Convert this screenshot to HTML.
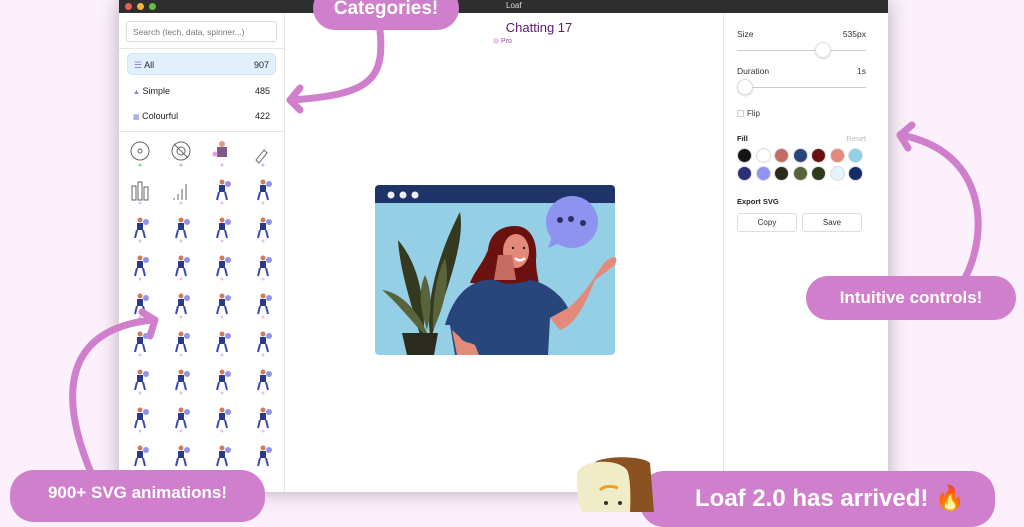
<!DOCTYPE html>
<html><head><style>
*{margin:0;padding:0;box-sizing:border-box}
body{width:1024px;height:512px;overflow:hidden;background:#fbf0fb;font-family:"Liberation Sans",sans-serif;position:relative}
.a{position:absolute}
.win{left:119px;top:0;width:769px;height:492px;background:#fff;box-shadow:0 0 18px rgba(60,40,60,.35)}
.tb{left:0;top:0;width:769px;height:13px;background:#2e2e2e}
.pill{position:absolute;background:#cf7fcc;color:#fff;font-weight:bold;border-radius:24px;text-align:center}
.row{position:absolute;left:8px;width:149px;height:22px;font-size:9px;color:#222;line-height:22px;padding:0 6px}
.sw{position:absolute;width:15px;height:15px;border-radius:50%;border:1px solid #ddd}
.btn{position:absolute;width:60px;height:19px;border:1px solid #ddd;border-radius:3px;font-size:8px;color:#333;text-align:center;line-height:18px}
</style></head><body>
<div class="a win">
 <div class="a tb">
  <div class="a" style="left:6px;top:3px;width:7px;height:7px;border-radius:50%;background:#ee5b55"></div>
  <div class="a" style="left:18px;top:3px;width:7px;height:7px;border-radius:50%;background:#f0b53a"></div>
  <div class="a" style="left:30px;top:3px;width:7px;height:7px;border-radius:50%;background:#5ec143"></div>
  <div class="a" style="left:387px;top:1px;font-size:8px;color:#ddd">Loaf</div>
 </div>
 <div class="a" style="left:165px;top:13px;width:1px;height:479px;background:#e6e6e6"></div>
 <div class="a" style="left:604px;top:13px;width:1px;height:479px;background:#e6e6e6"></div>
 <div class="a" style="left:7px;top:21px;width:151px;height:21px;border:1px solid #ddd;border-radius:3px;font-size:8.5px;color:#777;padding:5px 6px">Search (tech, data, spinner...)</div>
 <div class="a" style="left:0;top:48px;width:165px;height:1px;background:#e6e6e6"></div>
 <div class="row" style="top:53px;background:#e1f0fb;border:1px solid #cfe3f3;border-radius:5px"><span style="color:#7c7fe0">☰</span> All<span style="float:right">907</span></div>
 <div class="row" style="top:80px"><span style="color:#7c7fe0;font-size:7px">▲</span> Simple<span style="float:right">485</span></div>
 <div class="row" style="top:105px"><span style="color:#7c7fe0;font-size:7px">▦</span> Colourful<span style="float:right">422</span></div>
 <div class="a" style="left:0;top:131px;width:165px;height:1px;background:#e6e6e6"></div>
 <svg class="a" style="left:0;top:132px" width="165" height="340">
  <defs>
   <g id="fig">
    <circle cx="6" cy="-6" r="3" fill="#8f93f0"/><circle cx="0" cy="-8" r="2.5" fill="#d07a5a"/><rect x="-3" y="-5" width="6" height="7" fill="#2a3a8a"/><path d="M-3 2l-2 8M3 2l2 8" stroke="#3b4ab0" stroke-width="2"/>
   </g>
  </defs>
  <g fill="none" stroke="#666" stroke-width="1">
   <circle cx="21" cy="19" r="9"/><circle cx="21" cy="19" r="2"/>
   <circle cx="62" cy="19" r="9"/><circle cx="62" cy="19" r="4"/><line x1="55" y1="12" x2="69" y2="26"/>
   <rect x="13" y="54" width="4" height="14"/><rect x="19" y="50" width="4" height="18"/><rect x="25" y="55" width="4" height="13"/>
   <line x1="55" y1="66" x2="55" y2="68"/><line x1="59" y1="62" x2="59" y2="68"/><line x1="63" y1="57" x2="63" y2="68"/><line x1="67" y1="52" x2="67" y2="68"/>
   <path d="M137 28l8-10 3 3-8 10z"/>
  </g>
  <circle cx="103" cy="12" r="3" fill="#e29a8a"/><rect x="98" y="15" width="10" height="10" fill="#7d5a8a"/><circle cx="96" cy="22" r="2.5" fill="#e6a0e0"/>
  <g fill="#d9b0f0"><circle cx="21" cy="33" r="1.5" fill="#7fdc8a"/><circle cx="62" cy="33" r="1.5"/><circle cx="103" cy="33" r="1.5"/><circle cx="144" cy="33" r="1.5"/></g>
  <use href="#fig" x="103" y="58"/><use href="#fig" x="144" y="58"/>
  <use href="#fig" x="21" y="96"/><use href="#fig" x="62" y="96"/><use href="#fig" x="103" y="96"/><use href="#fig" x="144" y="96"/>
  <use href="#fig" x="21" y="134"/><use href="#fig" x="62" y="134"/><use href="#fig" x="103" y="134"/><use href="#fig" x="144" y="134"/>
  <use href="#fig" x="21" y="172"/><use href="#fig" x="62" y="172"/><use href="#fig" x="103" y="172"/><use href="#fig" x="144" y="172"/>
  <use href="#fig" x="21" y="210"/><use href="#fig" x="62" y="210"/><use href="#fig" x="103" y="210"/><use href="#fig" x="144" y="210"/>
  <use href="#fig" x="21" y="248"/><use href="#fig" x="62" y="248"/><use href="#fig" x="103" y="248"/><use href="#fig" x="144" y="248"/>
  <use href="#fig" x="21" y="286"/><use href="#fig" x="62" y="286"/><use href="#fig" x="103" y="286"/><use href="#fig" x="144" y="286"/>
  <use href="#fig" x="21" y="324"/><use href="#fig" x="62" y="324"/><use href="#fig" x="103" y="324"/><use href="#fig" x="144" y="324"/>
  <g fill="#e6c0f0">
   <circle cx="21" cy="71" r="1.5"/><circle cx="62" cy="71" r="1.5"/><circle cx="103" cy="71" r="1.5"/><circle cx="144" cy="71" r="1.5"/>
   <circle cx="21" cy="109" r="1.5"/><circle cx="62" cy="109" r="1.5"/><circle cx="103" cy="109" r="1.5"/><circle cx="144" cy="109" r="1.5"/>
   <circle cx="21" cy="147" r="1.5"/><circle cx="62" cy="147" r="1.5"/><circle cx="103" cy="147" r="1.5"/><circle cx="144" cy="147" r="1.5"/>
   <circle cx="21" cy="185" r="1.5"/><circle cx="62" cy="185" r="1.5"/><circle cx="103" cy="185" r="1.5"/><circle cx="144" cy="185" r="1.5"/>
   <circle cx="21" cy="223" r="1.5"/><circle cx="62" cy="223" r="1.5"/><circle cx="103" cy="223" r="1.5"/><circle cx="144" cy="223" r="1.5"/>
   <circle cx="21" cy="261" r="1.5"/><circle cx="62" cy="261" r="1.5"/><circle cx="103" cy="261" r="1.5"/><circle cx="144" cy="261" r="1.5"/>
   <circle cx="21" cy="299" r="1.5"/><circle cx="62" cy="299" r="1.5"/><circle cx="103" cy="299" r="1.5"/><circle cx="144" cy="299" r="1.5"/>
  </g>
 </svg>
 <div class="a" style="left:340px;top:20px;width:160px;text-align:center;font-size:13px;color:#5b1a6e">Chatting 17</div>
 <div class="a" style="left:374px;top:38px;font-size:7px;color:#9a4aa8"><span style="display:inline-block;width:6px;height:6px;border-radius:50%;background:#efc9f3;vertical-align:-1px"></span> Pro</div>
 <div class="a" style="left:618px;top:29px;font-size:8.5px;color:#333">Size</div>
 <div class="a" style="left:700px;top:29px;width:47px;text-align:right;font-size:8.5px;color:#333">535px</div>
 <div class="a" style="left:618px;top:50px;width:129px;height:1px;background:#ccc"></div>
 <div class="a" style="left:696px;top:42px;width:16px;height:16px;border-radius:50%;background:#fff;border:1px solid #ddd;box-shadow:0 1px 2px rgba(0,0,0,.15)"></div>
 <div class="a" style="left:618px;top:66px;font-size:8.5px;color:#333">Duration</div>
 <div class="a" style="left:700px;top:66px;width:47px;text-align:right;font-size:8.5px;color:#333">1s</div>
 <div class="a" style="left:618px;top:87px;width:129px;height:1px;background:#ccc"></div>
 <div class="a" style="left:618px;top:79px;width:16px;height:16px;border-radius:50%;background:#fff;border:1px solid #ddd;box-shadow:0 1px 2px rgba(0,0,0,.15)"></div>
 <div class="a" style="left:618px;top:110px;width:7px;height:7px;border:1px solid #ccc;border-radius:1px"></div>
 <div class="a" style="left:628px;top:109px;font-size:8px;color:#333">Flip</div>
 <div class="a" style="left:618px;top:134px;font-size:7.5px;font-weight:bold;color:#222">Fill</div>
 <div class="a" style="left:720px;top:134px;width:27px;text-align:right;font-size:7.5px;color:#bbb">Reset</div>
 <div class="sw" style="left:618px;top:148px;background:#151515"></div>
 <div class="sw" style="left:637px;top:148px;background:#fff"></div>
 <div class="sw" style="left:655px;top:148px;background:#c66c62"></div>
 <div class="sw" style="left:674px;top:148px;background:#28467c"></div>
 <div class="sw" style="left:692px;top:148px;background:#6a1010"></div>
 <div class="sw" style="left:711px;top:148px;background:#e38a7a"></div>
 <div class="sw" style="left:729px;top:148px;background:#93cfe6"></div>
 <div class="sw" style="left:618px;top:166px;background:#2a2f78"></div>
 <div class="sw" style="left:637px;top:166px;background:#8e95f2"></div>
 <div class="sw" style="left:655px;top:166px;background:#2c2a1c"></div>
 <div class="sw" style="left:674px;top:166px;background:#59643a"></div>
 <div class="sw" style="left:692px;top:166px;background:#2c3a1c"></div>
 <div class="sw" style="left:711px;top:166px;background:#e3f4fc"></div>
 <div class="sw" style="left:729px;top:166px;background:#142c66"></div>
 <div class="a" style="left:618px;top:197px;font-size:7.5px;font-weight:bold;color:#222">Export SVG</div>
 <div class="btn" style="left:618px;top:213px">Copy</div>
 <div class="btn" style="left:683px;top:213px">Save</div>
</div>
<svg class="a" style="left:370px;top:180px" width="250" height="180" viewBox="0 0 250 180">
 <rect x="5" y="5" width="240" height="170" rx="4" fill="#94cfe6"/>
 <path d="M9 5h232a4 4 0 0 1 4 4v14H5V9a4 4 0 0 1 4-4z" fill="#1e3468"/>
 <circle cx="21" cy="15" r="3.5" fill="#eef"/><circle cx="33" cy="15" r="3.5" fill="#eef"/><circle cx="45" cy="15" r="3.5" fill="#eef"/>
 <circle cx="202" cy="42" r="26" fill="#8f93f0"/><path d="M182 56l-4 12 14-6z" fill="#8f93f0"/>
 <circle cx="190" cy="40" r="3" fill="#2a3064"/><circle cx="201" cy="39" r="3" fill="#2a3064"/><circle cx="213" cy="43" r="3" fill="#2a3064"/>
 <path d="M60 155C55 120 70 70 90 32 95 60 80 100 62 155z" fill="#34391f"/>
 <path d="M50 155C40 120 30 90 28 60 45 80 55 110 54 155z" fill="#34391f"/>
 <path d="M55 155C40 140 25 120 12 110 30 112 48 130 58 155z" fill="#59643a"/>
 <path d="M57 150C50 130 48 110 55 95 62 110 62 130 57 150z" fill="#59643a"/>
 <path d="M63 150C62 125 66 95 75 78 80 100 75 125 63 150z" fill="#59643a"/>
 <path d="M32 153h36l-4 22H37z" fill="#2a2a1e"/>
 <path d="M100 103C105 90 112 85 118 70 120 52 132 46 145 46 160 46 168 60 166 80 166 95 170 100 168 106z" fill="#6b1210"/>
 <ellipse cx="146" cy="71" rx="13" ry="17" fill="#e38a7a"/>
 <path d="M128 75h14l4 25h-22z" fill="#c66c62"/>
 <path d="M145 78c3 3 7 3 10 0" stroke="#fff" stroke-width="2.5" fill="none"/>
 <circle cx="143" cy="68" r="1.2" fill="#222"/><circle cx="154" cy="68" r="1.2" fill="#222"/>
 <path d="M75 145C85 110 105 98 125 100 135 106 148 104 160 100 175 102 192 115 198 128L180 138 178 175H85L80 145z" fill="#28467c"/>
 <path d="M180 138L198 128C215 115 225 95 235 82 240 78 250 72 245 85L225 100C215 125 205 145 190 150z" fill="#e38a7a"/>
 <path d="M82 150l5 25h22l-4-10c-5-3-12-2-15-8z" fill="#e38a7a"/>
</svg>
<svg class="a" style="left:0;top:0" width="1024" height="512">
 <g fill="none" stroke="#cf7fcc" stroke-width="7" stroke-linecap="round" stroke-linejoin="round">
  <path d="M380 30C385 80 370 95 290 100"/><path d="M300 88L290 100 300 110"/>
  <path d="M965 278C990 230 985 150 900 135"/><path d="M912 125L900 135 908 148"/>
  <path d="M92 475C60 400 60 330 152 320"/><path d="M142 312L155 320 150 336"/>
 </g>
</svg>
<div class="pill" style="left:313px;top:-14px;width:146px;height:44px;font-size:19px;padding-top:8px;line-height:30px">Categories!</div>
<div class="pill" style="left:806px;top:276px;width:210px;height:44px;font-size:17px;line-height:44px">Intuitive controls!</div>
<div class="pill" style="left:10px;top:470px;width:255px;height:52px;font-size:17px;line-height:46px">900+ SVG animations!</div>
<div class="pill" style="left:640px;top:471px;width:355px;height:56px;font-size:24px;line-height:56px;padding-left:25px">Loaf 2.0 has arrived! <span style="color:#ff7a20">🔥</span></div>
<svg class="a" style="left:572px;top:455px" width="90" height="57">
 <path d="M20 10C25 0 70 0 78 8L82 57H30z" fill="#8a5220"/>
 <path d="M5 20C5 5 45 2 55 15 60 25 58 57 58 57H10C6 45 4 30 5 20z" fill="#f1ecc8"/>
 <path d="M28 35c5-5 12-4 18-2" stroke="#f0a020" stroke-width="3" fill="none"/>
 <circle cx="34" cy="48" r="2" fill="#333"/><circle cx="48" cy="48" r="2" fill="#333"/>
</svg>
</body></html>
